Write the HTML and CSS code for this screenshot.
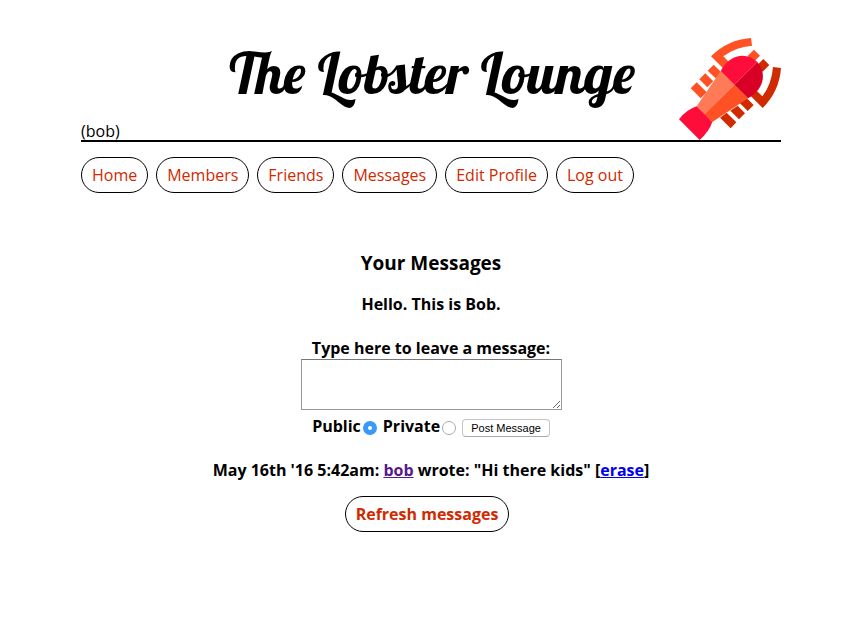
FILE: index.html
```html
<!DOCTYPE html>
<html lang="en">
<head>
<meta charset="utf-8">
<title>The Lobster Lounge: Messages</title>
<link rel="stylesheet" href="styles.css">
</head>
<body>
<div class="page">
  <header class="masthead">
    <h1 class="site-title">The Lobster Lounge</h1>
    <span class="username">(bob)</span>
    <svg class="logo" viewBox="27 24 306 306" aria-hidden="true">
      <g fill="#ff5124">
        <path d="M243 24L246 47Q196 51 160 79L176 95L158 113L123 79Q173 29 243 24Z"/>
        <path d="M252 59L270 77L250 97L232 79Z"/>
        <path d="M131 104L154 127L137 145L113 122Z"/>
        <path d="M106 130L130 154L112 172L88 148Z"/>
        <path d="M80 157L110 187L92 205L62 175Z"/>
      </g>
      <g fill="#cf2a00">
        <path d="M309 111L333 114Q328 184 278 234L243 199L260 182L277 199Q305 163 309 111Z"/>
        <path d="M280 87L298 105L278 125L260 107Z"/>
        <path d="M229 203L251 225L233 243L209 219Z"/>
        <path d="M203 227L225 250L207 268L181 242Z"/>
        <path d="M170 248L199 277L182 295L150 263Z"/>
      </g>
      <path fill="#ff7a57" d="M152 123L193 164L103 253L80 229Z"/>
      <path fill="#ff5124" d="M193 164L234 205L127 276L103 253Z"/>
      <path fill="#ff0d3a" d="M152 123C180 72 229 65 262 96L193 164Z"/>
      <path fill="#d90026" d="M262 96C292 130 281 180 234 205L193 164Z"/>
      <path fill="#ff0d3a" d="M80 229L127 276Q117 305 89 330L27 268Q49 239 80 229Z"/>
    </svg>
  </header>
  <nav class="menu">
    <a class="pill" href="#home">Home</a>
    <a class="pill" href="#members">Members</a>
    <a class="pill" href="#friends">Friends</a>
    <a class="pill" href="#messages">Messages</a>
    <a class="pill" href="#profile">Edit Profile</a>
    <a class="pill" href="#logout">Log out</a>
  </nav>
  <main class="content">
    <h2 class="heading">Your Messages</h2>
    <p class="greeting">Hello. This is Bob.</p>
    <form class="message-form">
      <label for="message">Type here to leave a message:</label>
      <textarea class="message-box" id="message" name="text"></textarea>
      <div class="controls">
        <label for="public">Public</label>
        <input class="radio" type="radio" id="public" name="pm" value="0" checked>
        <label class="private" for="private">Private</label>
        <input class="radio" type="radio" id="private" name="pm" value="1">
        <button class="post" type="button">Post Message</button>
      </div>
    </form>
    <p class="entry">May 16th '16 5:42am: <a class="author" href="#bob">bob</a> wrote: "Hi there kids" [<a class="erase" href="#erase">erase</a>]</p>
    <a class="pill refresh" href="#messages">Refresh messages</a>
  </main>
</div>
</body>
</html>
```
FILE: styles.css
```css
* {
  box-sizing: border-box;
}

body {
  margin: 0;
  padding: 38px 13px 38px 8px;
  background: #fff;
  color: #000;
  font: 16px/22px "Open Sans", "Noto Sans", sans-serif;
}

.page {
  max-width: 700px;
  margin: 0 auto;
}

.masthead {
  display: grid;
  grid-template-columns: 104px 1fr 102px;
  grid-template-rows: 84px 18px;
  border-bottom: 2px solid #000;
}

.site-title {
  grid-area: 1 / 2;
  align-self: start;
  margin: 0;
  text-align: center;
  white-space: nowrap;
  font: normal 57px/70px Lobster, "Liberation Serif", serif;
}

.username {
  grid-area: 2 / 1;
  line-height: 18px;
}

.logo {
  grid-area: 1 / 3 / 3 / 4;
  width: 102px;
  height: 102px;
}

.menu {
  display: flex;
  flex-wrap: wrap;
  gap: 8px;
  margin-top: 15px;
}

.pill {
  padding: 6px 10px;
  border: 1px solid #000;
  border-radius: 18px;
  color: #cf2a00;
  text-decoration: none;
}

.content {
  display: flex;
  flex-direction: column;
  align-items: center;
  margin-top: 57px;
  font-weight: bold;
  text-align: center;
}

.heading {
  margin: 0;
  font-size: 19px;
  line-height: 26px;
}

.greeting {
  margin: 17px 0 22px;
}

.message-form {
  display: flex;
  flex-direction: column;
  align-items: center;
}

.message-box {
  width: 261px;
  height: 51px;
  margin: 0;
  padding: 2px;
  border: 1px solid #999;
  border-top-color: #777;
  border-radius: 0;
  background: #fff;
  font: 13px "Liberation Mono", monospace;
}

.controls {
  display: flex;
  align-items: center;
  margin-top: 5px;
}

.radio {
  appearance: none;
  width: 14px;
  height: 14px;
  margin: 3px 2px 0;
  border: 1px solid #aaa;
  border-radius: 50%;
  background: #fff;
}

.radio:checked {
  border: 5px solid #3b99fc;
}

.private {
  margin-left: 4px;
}

.post {
  height: 18px;
  margin: 3px 0 0 4px;
  padding: 0 8px;
  border: 1px solid #c4c4c4;
  border-bottom-color: #aaa;
  border-radius: 4px;
  background: #fff;
  color: #000;
  font: 11px/16px "Liberation Sans", sans-serif;
}

.entry {
  margin: 22px 0 15px;
}

.author {
  color: #551a8b;
}

.erase {
  color: #00e;
}

.refresh {
  margin-right: 8px;
}
```
